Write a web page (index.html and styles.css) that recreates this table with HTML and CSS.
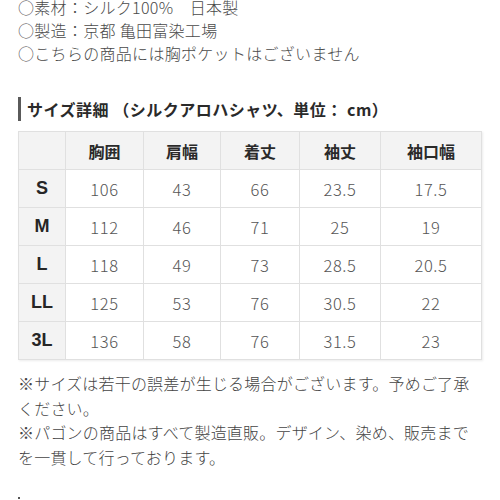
FILE: index.html
```html
<!DOCTYPE html>
<html lang="ja">
<head>
<meta charset="utf-8">
<link rel="stylesheet" href="styles.css">
</head>
<body>
<div class="page">
  <div class="specs">
    <p>○素材：シルク100%　日本製</p>
    <p>○製造：京都 亀田富染工場</p>
    <p>○こちらの商品には胸ポケットはございません</p>
  </div>
  <h2 class="heading">サイズ詳細 （シルクアロハシャツ、単位： cm）</h2>
  <table class="size-table">
    <colgroup>
      <col class="c0"><col class="c1"><col class="c2"><col class="c3"><col class="c4"><col class="c5">
    </colgroup>
    <thead>
      <tr><th></th><th>胸囲</th><th>肩幅</th><th>着丈</th><th>袖丈</th><th>袖口幅</th></tr>
    </thead>
    <tbody>
      <tr><th>S</th><td>106</td><td>43</td><td>66</td><td>23.5</td><td>17.5</td></tr>
      <tr><th>M</th><td>112</td><td>46</td><td>71</td><td>25</td><td>19</td></tr>
      <tr><th>L</th><td>118</td><td>49</td><td>73</td><td>28.5</td><td>20.5</td></tr>
      <tr><th>LL</th><td>125</td><td>53</td><td>76</td><td>30.5</td><td>22</td></tr>
      <tr><th>3L</th><td>136</td><td>58</td><td>76</td><td>31.5</td><td>23</td></tr>
    </tbody>
  </table>
  <div class="notes">
    <p>※サイズは若干の誤差が生じる場合がございます。予めご了承<br>ください。</p>
    <p>※パゴンの商品はすべて製造直販。デザイン、染め、販売まで<br>を一貫して行っております。</p>
  </div>
  <div class="dot"></div>
</div>
</body>
</html>
```

FILE: styles.css
```css
html, body {
  margin: 0;
  padding: 0;
  background: #ffffff;
}
body {
  font-family: "Noto Sans CJK JP", "Noto Sans", sans-serif;
  color: #4a4a4a;
  overflow: hidden;
}
.page {
  padding: 0 0 0 18px;
  margin-top: -4px;
  width: 476px;
}
p {
  margin: 0;
}
.specs {
  font-size: 16px;
  line-height: 23px;
  color: #4a4a4a;
  font-weight: 300;
  letter-spacing: 0.3px;
}
.heading {
  margin: 32px 0 0 0;
  font-size: 16px;
  line-height: 24px;
  font-weight: bold;
  color: #2a2a2a;
  border-left: 3px solid #5a5a5a;
  padding-left: 6px;
  height: 24px;
  letter-spacing: 0.5px;
}
.size-table {
  margin-top: 10px;
  border-collapse: collapse;
  table-layout: fixed;
  width: 463px;
  box-shadow: 1px 1px 2px rgba(0,0,0,0.08);
}
.c0 { width: 47px; }
.c1 { width: 78px; }
.c2 { width: 77px; }
.c3 { width: 79px; }
.c4 { width: 81px; }
.c5 { width: 101px; }
.size-table tr {
  height: 38px;
}
.size-table th,
.size-table td {
  border: 1.5px solid #e0e0e0;
  padding: 0;
  text-align: center;
  vertical-align: middle;
}
.size-table thead th {
  background: #f3f3f3;
  font-size: 16px;
  font-weight: bold;
  color: #2a2a2a;
}
.size-table tbody th {
  background: #f3f3f3;
  font-family: "Liberation Sans", Arial, sans-serif;
  font-size: 18px;
  font-weight: bold;
  color: #262626;
}
.size-table td {
  font-size: 16.5px;
  font-weight: 300;
  color: #555555;
  letter-spacing: 0.6px;
}
.notes {
  margin-top: 11px;
  font-size: 16px;
  line-height: 24.5px;
  color: #444444;
  font-weight: 300;
  letter-spacing: 0.2px;
}
.dot {
  margin-top: 28px;
  width: 2px;
  height: 2px;
  background: #555;
}
```
